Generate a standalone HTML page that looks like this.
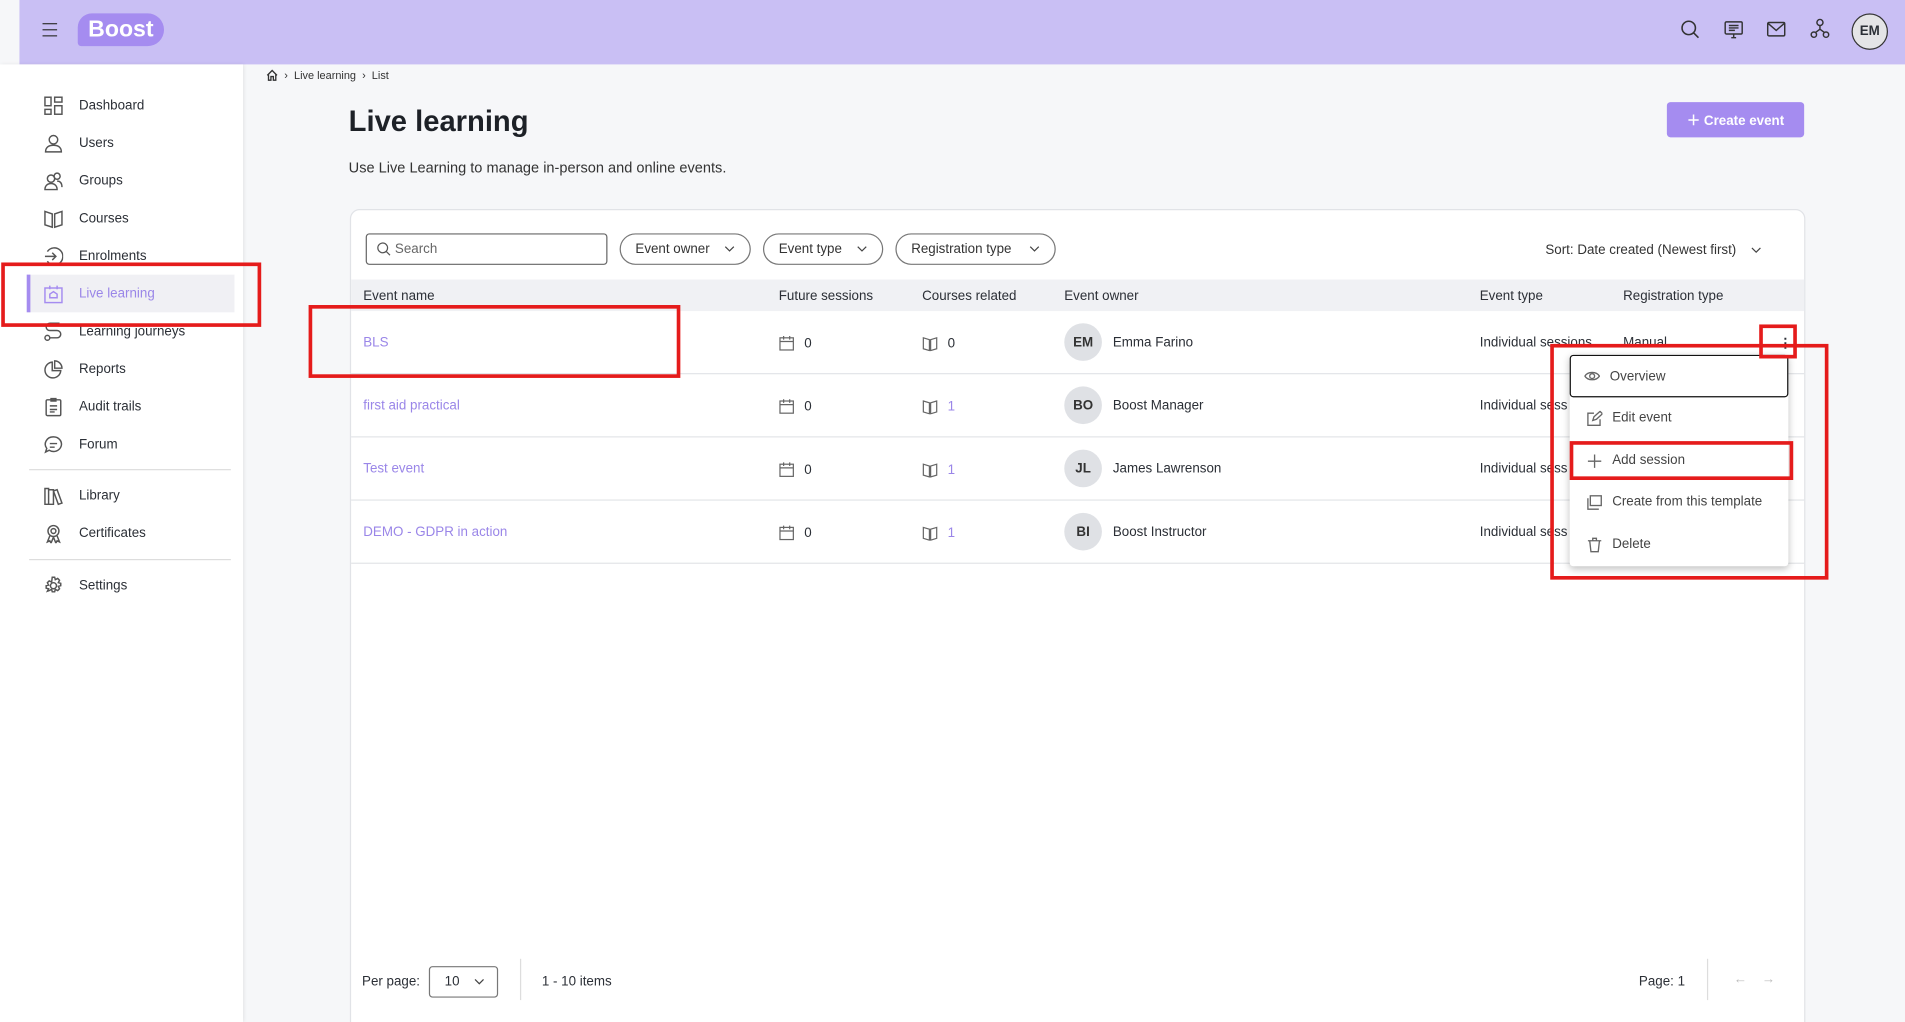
<!DOCTYPE html>
<html><head><meta charset="utf-8"><style>
html,body{margin:0;padding:0;width:1905px;height:1022px;overflow:hidden;background:#f6f7f9;font-family:"Liberation Sans",sans-serif;color:#2b2f36}
#w{position:absolute;left:0;top:0;width:1568px;height:841px;overflow:hidden;transform:scale(1.21492,1.2152);transform-origin:0 0;background:#f6f7f9}
.a{position:absolute}
.hdr{left:16px;top:0;width:1552px;height:53px;background:#c9bff4}
.side{left:0;top:53px;width:200px;height:788px;background:#fff;box-shadow:1px 0 3px rgba(0,0,0,.08)}
.nav{position:absolute;left:36px;font-size:11px;color:#2b2f36;display:flex;align-items:center;height:20px}
.nav svg{width:16px;height:16px;margin-right:13px;stroke:#555;fill:none;stroke-width:1.2}
.card{left:288px;top:172px;width:1196px;height:700px;background:#fff;border:1px solid #e1e3e7;border-radius:8px}
.pill{position:absolute;top:19px;height:26px;border:1px solid #777;border-radius:14px;font-size:11px;display:flex;align-items:center;padding:0 12px;box-sizing:border-box;color:#333;justify-content:space-between}
.th{position:absolute;font-size:11px;color:#2b2f36}
.row{position:absolute;left:0;width:1196px;height:51px;border-bottom:1px solid #e3e5e8}
.cell{position:absolute;top:20px;font-size:11px;color:#2b2f36;display:flex;align-items:center}
.cell svg{margin-right:8px}
.link{color:#9a86e8}
.av{position:absolute;left:587px;top:10px;width:31px;height:31px;border-radius:50%;background:#dfe1e5;font-size:11px;font-weight:bold;display:flex;align-items:center;justify-content:center;color:#333}
.red{position:absolute;border:3px solid #e51b1b;box-sizing:border-box}
.mi{position:absolute;left:0;width:180px;height:34px;display:flex;align-items:center;font-size:11px;color:#444;padding-left:14px;box-sizing:border-box}
.mi svg{width:13px;height:13px;margin-right:8px;fill:none;stroke:#666;stroke-width:1.1}
</style></head><body><div id="w">
<div class="a hdr"></div>
<div class="a" style="left:35px;top:19px;width:12px;height:1.2px;background:#333;box-shadow:0 5px 0 #333,0 10px 0 #333"></div>
<div class="a" style="left:64px;top:11px;width:71px;height:27px;background:#a58cf0;border-radius:12px 14px 14px 3px;color:#fff;font-weight:bold;font-size:19px;line-height:27px;text-align:center">Boost</div>
<svg class="a" style="left:1383px;top:16px" width="16" height="16" viewBox="0 0 16 16" fill="none" stroke="#333" stroke-width="1.3"><circle cx="7" cy="7" r="5.5"/><path d="M11 11l4 4"/></svg>
<svg class="a" style="left:1419px;top:16px" width="16" height="16" viewBox="0 0 16 16" fill="none" stroke="#333" stroke-width="1.2"><rect x="1" y="2" width="14" height="10" rx="1"/><path d="M4 5h8M4 7h8M4 9h5M6 15h4M8 12v3"/></svg>
<svg class="a" style="left:1454px;top:17px" width="16" height="14" viewBox="0 0 16 14" fill="none" stroke="#333" stroke-width="1.2"><rect x="1" y="1.5" width="14" height="11" rx="1"/><path d="M1 2l7 6 7-6"/></svg>
<svg class="a" style="left:1490px;top:15px" width="16" height="17" viewBox="0 0 16 17" fill="none" stroke="#333" stroke-width="1.2"><circle cx="8" cy="3.5" r="2.5"/><circle cx="3" cy="13.5" r="2.2"/><circle cx="13" cy="13.5" r="2.2"/><path d="M8 6v3M8 9L4 12M8 9l4 3"/></svg>
<div class="a" style="left:1524px;top:11px;width:28px;height:28px;border:1.5px solid #333;border-radius:50%;background:#e4e4e6;font-size:11px;font-weight:bold;display:flex;align-items:center;justify-content:center">EM</div>

<div class="a side"></div>
<div class="nav" style="top:77px"><svg viewBox="0 0 16 16"><rect x="1" y="1" width="5" height="7"/><rect x="1" y="11" width="5" height="4"/><rect x="9" y="1" width="6" height="4"/><rect x="9" y="8" width="6" height="7"/></svg>Dashboard</div>
<div class="nav" style="top:108px"><svg viewBox="0 0 16 16"><circle cx="8" cy="5" r="3.5"/><path d="M1.5 15c0-4 3-5.5 6.5-5.5s6.5 1.5 6.5 5.5z"/></svg>Users</div>
<div class="nav" style="top:139px"><svg viewBox="0 0 16 16"><circle cx="6" cy="6" r="3"/><circle cx="11" cy="4" r="2.5"/><path d="M1 15c0-3 2-5 5-5s5 2 5 5zM11 8c3 0 4 2 4 5"/></svg>Groups</div>
<div class="nav" style="top:170px"><svg viewBox="0 0 16 16"><path d="M1 2l6 2v11l-6-2zM15 2l-6 2v11l6-2z"/></svg>Courses</div>
<div class="nav" style="top:201px"><svg viewBox="0 0 16 16"><path d="M3 4a7 7 0 1 1 0 8M1 8h9M7 5l3 3-3 3"/></svg>Enrolments</div>
<div class="a" style="left:22px;top:226px;width:171px;height:31px;background:#f0f0f4;border-left:3px solid #a58cf0;box-sizing:border-box"></div>
<div class="nav" style="top:232px;color:#9a86e8"><svg viewBox="0 0 16 16" style="stroke:#a58cf0"><rect x="1" y="3" width="14" height="12"/><path d="M5 1v3M11 1v3M5 11V8l3-2 3 2v3z"/></svg>Live learning</div>
<div class="nav" style="top:263px"><svg viewBox="0 0 16 16"><circle cx="3" cy="13" r="2"/><path d="M5 13h6a3 3 0 0 0 0-6H5a3 3 0 0 1 0-6h8"/></svg>Learning journeys</div>
<div class="nav" style="top:294px"><svg viewBox="0 0 16 16"><path d="M7 2a6.5 6.5 0 1 0 7 7H7z M9 1v6h6a6 6 0 0 0-6-6z"/></svg>Reports</div>
<div class="nav" style="top:325px"><svg viewBox="0 0 16 16"><rect x="2" y="2" width="12" height="13" rx="1"/><path d="M6 1h4v2H6zM5 7h6M5 10h6M5 12h4"/></svg>Audit trails</div>
<div class="nav" style="top:356px"><svg viewBox="0 0 16 16"><path d="M8 1.5a6.5 6 0 1 1-3.5 11L1.5 14l1-3A6.5 6 0 0 1 8 1.5zM5 7h6M5 10h4"/></svg>Forum</div>
<div class="a" style="left:24px;top:386px;width:166px;height:1px;background:#ddd"></div>
<div class="nav" style="top:398px"><svg viewBox="0 0 16 16"><path d="M1 2h3v13H1zM4 3h4v12H4zM8 4l3-1 4 11-3 1z"/></svg>Library</div>
<div class="nav" style="top:429px"><svg viewBox="0 0 16 16"><circle cx="8" cy="6" r="4.5"/><circle cx="8" cy="6" r="2"/><path d="M5 10l-2 5 2-1 1 2 2-5M11 10l2 5-2-1-1 2-2-5"/></svg>Certificates</div>
<div class="a" style="left:24px;top:460px;width:166px;height:1px;background:#ddd"></div>
<div class="nav" style="top:472px"><svg viewBox="0 0 16 16"><circle cx="8" cy="8" r="2.5"/><path d="M7 1h2l.5 2 2-1 1.5 1.5-1 2 2 .5v2l-2 .5 1 2-1.5 1.5-2-1-.5 2H7l-.5-2-2 1L3 12.5l1-2-2-.5V8l2-.5-1-2L4.5 4l2 1z"/></svg>Settings</div>

<div class="a" style="left:219px;top:57px;font-size:9px;color:#333;display:flex;align-items:center"><svg width="10" height="10" viewBox="0 0 10 10" fill="none" stroke="#333" stroke-width="1.1"><path d="M1 5l4-4 4 4M2 4v5h2V6h2v3h2V4"/></svg>&nbsp;&nbsp;›&nbsp;&nbsp;Live learning&nbsp;&nbsp;›&nbsp;&nbsp;List</div>
<div class="a" style="left:287px;top:87px;font-size:24px;font-weight:bold;color:#1d2127">Live learning</div>
<div class="a" style="left:287px;top:131px;font-size:12px;color:#333">Use Live Learning to manage in-person and online events.</div>
<div class="a" style="left:1372px;top:84px;width:113px;height:29px;background:#a58cf0;border-radius:3px;color:#fff;font-size:11px;font-weight:bold;display:flex;align-items:center;justify-content:center">＋&nbsp;Create event</div>

<div class="a card">
<div class="a" style="left:12px;top:19px;width:199px;height:26px;border:1px solid #666;border-radius:3px;box-sizing:border-box;font-size:11px;color:#666;display:flex;align-items:center;padding-left:8px"><svg width="12" height="12" viewBox="0 0 12 12" fill="none" stroke="#555"><circle cx="5" cy="5" r="4"/><path d="M8 8l3 3"/></svg>&nbsp;Search</div>
<div class="pill" style="left:221px;width:108px">Event owner <svg width="9" height="6" viewBox="0 0 9 6" fill="none" stroke="#444"><path d="M1 1l3.5 3.5L8 1"/></svg></div>
<div class="pill" style="left:339px;width:99px">Event type <svg width="9" height="6" viewBox="0 0 9 6" fill="none" stroke="#444"><path d="M1 1l3.5 3.5L8 1"/></svg></div>
<div class="pill" style="left:448px;width:132px">Registration type <svg width="9" height="6" viewBox="0 0 9 6" fill="none" stroke="#444"><path d="M1 1l3.5 3.5L8 1"/></svg></div>
<div class="a" style="left:983px;top:27px;font-size:11px;color:#333;display:flex;align-items:center">Sort: Date created (Newest first)&nbsp;&nbsp;&nbsp;&nbsp;<svg width="9" height="6" viewBox="0 0 9 6" fill="none" stroke="#444"><path d="M1 1l3.5 3.5L8 1"/></svg></div>
<div class="a" style="left:0;top:57px;width:1196px;height:26px;background:#f0f1f4"></div>
<div class="th" style="left:10px;top:65px">Event name</div>
<div class="th" style="left:352px;top:65px">Future sessions</div>
<div class="th" style="left:470px;top:65px">Courses related</div>
<div class="th" style="left:587px;top:65px">Event owner</div>
<div class="th" style="left:929px;top:65px">Event type</div>
<div class="th" style="left:1047px;top:65px">Registration type</div>

<div class="row" style="top:83px"><div class="cell link" style="left:10px">BLS</div><div class="cell" style="left:352px"><svg width="13" height="13" viewBox="0 0 13 13" fill="none" stroke="#666"><rect x="1" y="2" width="11" height="10"/><path d="M1 5h11M4 0.5v3M9 0.5v3"/></svg>0</div><div class="cell" style="left:470px"><svg width="13" height="13" viewBox="0 0 13 13" fill="none" stroke="#666"><path d="M1 2l5 1.5v9L1 11zM12 2l-5 1.5v9l5-1.5z"/></svg>0</div><div class="av">EM</div><div class="cell" style="left:627px">Emma Farino</div><div class="cell" style="left:929px">Individual sessions</div><div class="cell" style="left:1047px">Manual</div><div class="cell" style="left:1175px;font-weight:bold">⋮</div></div>
<div class="row" style="top:135px"><div class="cell link" style="left:10px">first aid practical</div><div class="cell" style="left:352px"><svg width="13" height="13" viewBox="0 0 13 13" fill="none" stroke="#666"><rect x="1" y="2" width="11" height="10"/><path d="M1 5h11M4 0.5v3M9 0.5v3"/></svg>0</div><div class="cell" style="left:470px"><svg width="13" height="13" viewBox="0 0 13 13" fill="none" stroke="#666"><path d="M1 2l5 1.5v9L1 11zM12 2l-5 1.5v9l5-1.5z"/></svg><span class="link">1</span></div><div class="av">BO</div><div class="cell" style="left:627px">Boost Manager</div><div class="cell" style="left:929px">Individual sess</div></div>
<div class="row" style="top:187px"><div class="cell link" style="left:10px">Test event</div><div class="cell" style="left:352px"><svg width="13" height="13" viewBox="0 0 13 13" fill="none" stroke="#666"><rect x="1" y="2" width="11" height="10"/><path d="M1 5h11M4 0.5v3M9 0.5v3"/></svg>0</div><div class="cell" style="left:470px"><svg width="13" height="13" viewBox="0 0 13 13" fill="none" stroke="#666"><path d="M1 2l5 1.5v9L1 11zM12 2l-5 1.5v9l5-1.5z"/></svg><span class="link">1</span></div><div class="av">JL</div><div class="cell" style="left:627px">James Lawrenson</div><div class="cell" style="left:929px">Individual sess</div></div>
<div class="row" style="top:239px"><div class="cell link" style="left:10px">DEMO - GDPR in action</div><div class="cell" style="left:352px"><svg width="13" height="13" viewBox="0 0 13 13" fill="none" stroke="#666"><rect x="1" y="2" width="11" height="10"/><path d="M1 5h11M4 0.5v3M9 0.5v3"/></svg>0</div><div class="cell" style="left:470px"><svg width="13" height="13" viewBox="0 0 13 13" fill="none" stroke="#666"><path d="M1 2l5 1.5v9L1 11zM12 2l-5 1.5v9l5-1.5z"/></svg><span class="link">1</span></div><div class="av">BI</div><div class="cell" style="left:627px">Boost Instructor</div><div class="cell" style="left:929px">Individual sess</div></div>

<div class="a" style="left:9px;top:629px;font-size:11px">Per page:</div>
<div class="a" style="left:64px;top:622px;width:57px;height:26px;border:1px solid #777;border-radius:3px;box-sizing:border-box;font-size:11px;display:flex;align-items:center;padding-left:12px">10&nbsp;&nbsp;&nbsp;&nbsp;<svg width="9" height="6" viewBox="0 0 9 6" fill="none" stroke="#444"><path d="M1 1l3.5 3.5L8 1"/></svg></div>
<div class="a" style="left:139px;top:616px;width:1px;height:34px;background:#ddd"></div>
<div class="a" style="left:157px;top:629px;font-size:11px">1 - 10 items</div>
<div class="a" style="left:1060px;top:629px;font-size:11px">Page: 1</div>
<div class="a" style="left:1116px;top:616px;width:1px;height:34px;background:#ddd"></div>
<div class="a" style="left:1138px;top:627px;font-size:11px;color:#bbb">←&nbsp;&nbsp;&nbsp;&nbsp;→</div>
</div>

<div class="a" style="left:1292px;top:292px;width:180px;height:174px;background:#fff;border-radius:3px;box-shadow:0 2px 6px rgba(0,0,0,.25)">
<div class="mi" style="top:0;border:1.5px solid #111;border-radius:3px;height:35px;padding-left:11px"><svg viewBox="0 0 13 13"><path d="M0.5 6.5C3 2.5 10 2.5 12.5 6.5 10 10.5 3 10.5 0.5 6.5z"/><circle cx="6.5" cy="6.5" r="2"/></svg>Overview</div>
<div class="mi" style="top:35px"><svg viewBox="0 0 13 13"><path d="M6 2H1v10h10V7M5 8l1-3 5-4.5 2 2L8 7z"/></svg>Edit event</div>
<div class="mi" style="top:70px"><svg viewBox="0 0 13 13"><path d="M6.5 1v11M1 6.5h11"/></svg>Add session</div>
<div class="mi" style="top:104px"><svg viewBox="0 0 13 13"><rect x="3" y="1" width="9" height="8"/><path d="M1 3v9h9"/></svg>Create from this template</div>
<div class="mi" style="top:139px"><svg viewBox="0 0 13 13"><path d="M1 3h11M5 3V1h3v2M2.5 3l1 9h6l1-9"/></svg>Delete</div>
</div>

<div class="red" style="left:1px;top:216px;width:214px;height:53px"></div>
<div class="red" style="left:254px;top:251px;width:306px;height:60px"></div>
<div class="red" style="left:1448px;top:267px;width:31px;height:28px"></div>
<div class="red" style="left:1276px;top:283px;width:229px;height:194px"></div>
<div class="red" style="left:1292px;top:363px;width:184px;height:32px"></div>
</div></body></html>
